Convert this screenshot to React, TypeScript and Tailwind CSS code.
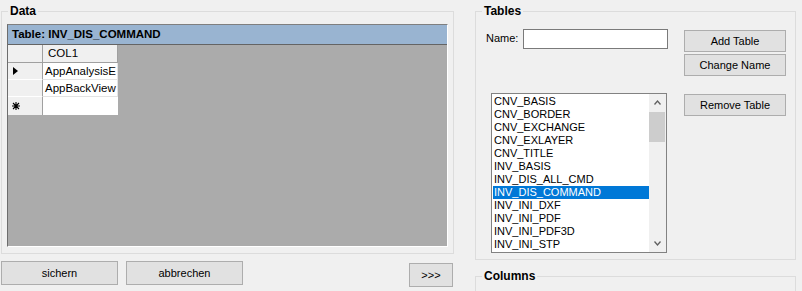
import React from "react";

const tables = [
  "CNV_BASIS",
  "CNV_BORDER",
  "CNV_EXCHANGE",
  "CNV_EXLAYER",
  "CNV_TITLE",
  "INV_BASIS",
  "INV_DIS_ALL_CMD",
  "INV_DIS_COMMAND",
  "INV_INI_DXF",
  "INV_INI_PDF",
  "INV_INI_PDF3D",
  "INV_INI_STP",
];

function GroupBox({
  title,
  className,
  children,
}: {
  title: string;
  className: string;
  children?: React.ReactNode;
}) {
  return (
    <div className={"relative shrink-0 border border-[#dcdcdc] " + className}>
      <div className="absolute top-[-7px] left-[6px] px-[2px] bg-[#f0f0f0] text-[12px] leading-[13px] font-bold text-black">
        {title}
      </div>
      {children}
    </div>
  );
}

function WinButton({
  label,
  className,
}: {
  label: string;
  className: string;
}) {
  return (
    <div
      className={
        "flex items-center justify-center border border-[#adadad] bg-[#e1e1e1] text-[11px] text-black " +
        className
      }
    >
      {label}
    </div>
  );
}

function DataGrid() {
  return (
    <div className="w-[441px] h-[223px] flex flex-col border-t border-l border-t-[#7f7f7f] border-l-[#6d6d6d] border-r border-b border-r-white border-b-white bg-[#ababab]">
      <div className="h-[20px] shrink-0 bg-[#99b4d1] border-b border-[#646464] pl-[4px] text-[11.5px] leading-[19px] font-bold text-black">
        Table: INV_DIS_COMMAND
      </div>
      <div className="flex flex-col w-[110px] text-[11.5px] text-black">
        {/* header row */}
        <div className="flex h-[18px]">
          <div className="w-[35px] bg-[#f0f0f0] border-r border-b border-[#a0a0a0]" />
          <div className="w-[75px] bg-[#f0f0f0] border-r border-b border-[#a0a0a0] pl-[5px] leading-[17px]">
            COL1
          </div>
        </div>
        <div className="flex h-[17px]">
          <div className="w-[35px] bg-[#f0f0f0] border-r border-b border-r-[#a0a0a0] border-b-white flex items-center pl-[5px]">
            <svg width="5" height="8" viewBox="0 0 5 8">
              <path d="M0 0 L5 4 L0 8 Z" fill="#000" />
            </svg>
          </div>
          <div className="w-[75px] bg-white border-r border-b border-[#e3e3e3] pl-[2px] leading-[17px] overflow-hidden whitespace-nowrap">
            AppAnalysisE
          </div>
        </div>
        <div className="flex h-[17px]">
          <div className="w-[35px] bg-[#f0f0f0] border-r border-b border-r-[#a0a0a0] border-b-white" />
          <div className="w-[75px] bg-white border-r border-b border-[#e3e3e3] pl-[2px] leading-[17px] overflow-hidden whitespace-nowrap">
            AppBackView
          </div>
        </div>
        <div className="flex h-[18px]">
          <div className="w-[35px] bg-[#f0f0f0] border-r border-r-[#a0a0a0] flex items-center pl-[4px]">
            <svg width="8" height="8" viewBox="0 0 8 8">
              <path
                d="M4 0 V8 M0 4 H8 M1 1 L7 7 M7 1 L1 7"
                stroke="#000"
                strokeWidth="1.1"
              />
            </svg>
          </div>
          <div className="w-[75px] bg-white" />
        </div>
      </div>
    </div>
  );
}

function ListBox() {
  return (
    <div className="ml-[5px] w-[176px] h-[160px] border border-[#828282] bg-white flex">
      <div className="flex-1 pt-[1px] pl-[1px] text-[11px] leading-[13px] text-black overflow-hidden">
        {tables.map((t) => (
          <div
            key={t}
            className={
              "h-[13px] px-[1px] whitespace-nowrap " +
              (t === "INV_DIS_COMMAND" ? "bg-[#0078d7] text-white" : "")
            }
          >
            {t}
          </div>
        ))}
      </div>
      <div className="w-[17px] bg-[#f0f0f0] flex flex-col">
        <div className="h-[17px] flex items-center justify-center">
          <svg width="7" height="5" viewBox="0 0 7 5">
            <path d="M0.5 4.5 L3.5 1 L6.5 4.5" stroke="#606060" strokeWidth="1.3" fill="none" />
          </svg>
        </div>
        <div className="mt-[1px] h-[30px] mr-[1px] bg-[#cdcdcd]" />
        <div className="flex-1" />
        <div className="h-[17px] flex items-center justify-center">
          <svg width="7" height="5" viewBox="0 0 7 5">
            <path d="M0.5 0.5 L3.5 4 L6.5 0.5" stroke="#606060" strokeWidth="1.3" fill="none" />
          </svg>
        </div>
      </div>
    </div>
  );
}

export default function App() {
  return (
    <div className="w-[802px] h-[291px] overflow-hidden bg-[#f0f0f0] flex font-['Liberation_Sans',Arial,sans-serif]">
      {/* left side */}
      <div className="w-[475px] shrink-0 pl-[1px] pt-[11px] flex flex-col">
        <GroupBox title="Data" className="w-[453px] h-[243px] pl-[5px] pt-[12px]">
          <DataGrid />
        </GroupBox>
        <div className="flex items-start mt-[7px]">
          <WinButton label="sichern" className="w-[117px] h-[24px]" />
          <WinButton label="abbrechen" className="ml-[8px] w-[117px] h-[24px]" />
          <WinButton label=">>>" className="ml-[166px] mt-[2px] w-[44px] h-[24px]" />
        </div>
      </div>

      {/* right side */}
      <div className="w-[321px] shrink-0 pt-[11px] flex flex-col">
        <GroupBox title="Tables" className="w-[321px] h-[249px] pl-[10px] pt-[17px] flex">
          <div className="w-[182px] flex flex-col">
            <div className="flex">
              <div className="w-[37px] pt-[3px] text-[11px] leading-[13px] text-black">Name:</div>
              <div className="w-[145px] h-[20px] border border-[#7a7a7a] bg-white" />
            </div>
            <div className="mt-[44px]">
              <ListBox />
            </div>
          </div>
          <div className="ml-[16px] pt-[1px] flex flex-col">
            <WinButton label="Add Table" className="w-[102px] h-[22px]" />
            <WinButton label="Change Name" className="mt-[2px] w-[102px] h-[22px]" />
            <WinButton label="Remove Table" className="mt-[18px] w-[102px] h-[22px]" />
          </div>
        </GroupBox>
        <GroupBox title="Columns" className="mt-[16px] w-[321px] h-[60px]" />
      </div>
    </div>
  );
}
